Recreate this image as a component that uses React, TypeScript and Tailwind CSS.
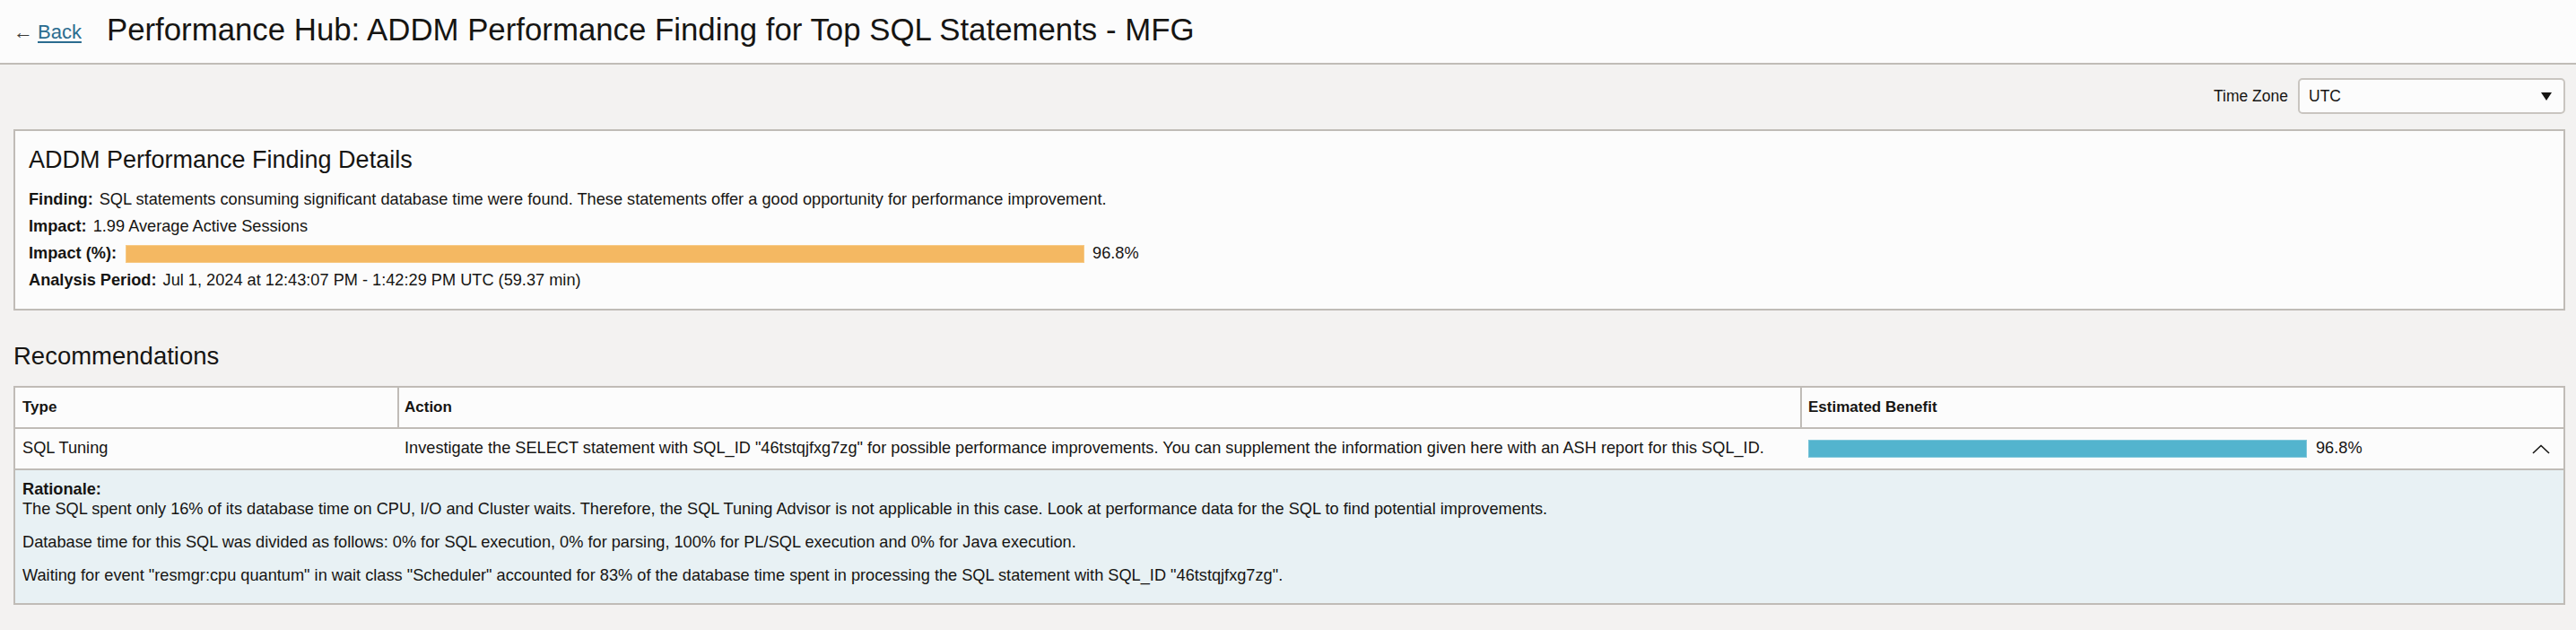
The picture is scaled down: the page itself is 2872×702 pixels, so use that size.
import React from 'react';

const rationale = [
  'The SQL spent only 16% of its database time on CPU, I/O and Cluster waits. Therefore, the SQL Tuning Advisor is not applicable in this case. Look at performance data for the SQL to find potential improvements.',
  'Database time for this SQL was divided as follows: 0% for SQL execution, 0% for parsing, 100% for PL/SQL execution and 0% for Java execution.',
  'Waiting for event "resmgr:cpu quantum" in wait class "Scheduler" accounted for 83% of the database time spent in processing the SQL statement with SQL_ID "46tstqjfxg7zg".',
];

const DetailRow = ({ label, children }: { label: string; children: React.ReactNode }) => (
  <div className="flex h-[30px] items-center text-[18.2px]">
    <span className="mr-[7px] font-bold">{label}</span>
    {children}
  </div>
);

const App = () => {
  return (
    <div className="min-h-screen bg-[#f3f2f1] font-['Liberation_Sans',Arial,sans-serif] text-[#161513]">
      <header className="flex h-[72px] items-center border-b-2 border-[#c0bcb7] bg-[#fcfcfc] pb-[4px] pl-[15px]">
        <a href="#" className="mt-[4px] flex items-center text-[22px] text-[#2b6c8f]">
          <span className="mr-[5px] text-[22px] text-[#3a3937]">←</span>
          <span className="underline decoration-2 underline-offset-[3px]">Back</span>
        </a>
        <h1 className="ml-[28px] text-[34.8px] leading-[40px]">
          Performance Hub: ADDM Performance Finding for Top SQL Statements - MFG
        </h1>
      </header>

      <main className="pb-[28px] pl-[15px] pr-[12px] pt-[15px]">
        <div className="flex items-center justify-end gap-[11px] text-[17.5px]">
          <span>Time Zone</span>
          <div className="flex h-[40px] w-[298px] items-center justify-between rounded-[5px] border-2 border-[#c9c5c0] bg-[#fcfcfc] pl-[10px] pr-[13px]">
            <span>UTC</span>
            <svg width="12" height="9" viewBox="0 0 12 9">
              <polygon points="0,0 12,0 6,9" fill="#161513" />
            </svg>
          </div>
        </div>

        <section className="mt-[17px] border-2 border-[#c0bcb7] bg-[#fcfcfc] px-[15px] py-[16px]">
          <h2 className="mb-[14px] text-[27px] leading-[32px]">ADDM Performance Finding Details</h2>
          <DetailRow label="Finding:">
            <span>
              SQL statements consuming significant database time were found. These statements offer a good
              opportunity for performance improvement.
            </span>
          </DetailRow>
          <DetailRow label="Impact:">
            <span>1.99 Average Active Sessions</span>
          </DetailRow>
          <DetailRow label="Impact (%):">
            <div className="ml-[3px] h-[20px] w-[1069px] border border-[#f7c985] bg-[#f4b862]" />
            <span className="ml-[9px]">96.8%</span>
          </DetailRow>
          <DetailRow label="Analysis Period:">
            <span>Jul 1, 2024 at 12:43:07 PM - 1:42:29 PM UTC (59.37 min)</span>
          </DetailRow>
        </section>

        <h2 className="mt-[35px] text-[27.5px] leading-[32px]">Recommendations</h2>

        <div className="mt-[17px] border-2 border-[#c0bcb7] bg-[#fcfcfc] text-[18.2px]">
          <div className="grid h-[46px] grid-cols-[428px_1fr_849px] border-b-2 border-[#c0bcb7] text-[17px] font-bold">
            <div className="flex items-center border-r-2 border-[#c0bcb7] px-[8px]">Type</div>
            <div className="flex items-center border-r-2 border-[#c0bcb7] px-[6px]">Action</div>
            <div className="flex items-center px-[7px]">Estimated Benefit</div>
          </div>
          <div className="grid h-[46px] grid-cols-[428px_1fr_849px] border-b-2 border-[#c0bcb7]">
            <div className="flex items-center px-[8px]">SQL Tuning</div>
            <div className="flex items-center px-[6px]">
              Investigate the SELECT statement with SQL_ID "46tstqjfxg7zg" for possible performance improvements. You
              can supplement the information given here with an ASH report for this SQL_ID.
            </div>
            <div className="flex items-center pl-[7px] pr-[15px]">
              <div className="h-[20px] w-[556px] border border-[#7fc6da] bg-[#53b4ce]" />
              <span className="ml-[10px]">96.8%</span>
              <div className="flex-1" />
              <svg width="20" height="11" viewBox="0 0 20 11">
                <polyline points="1,10 10,1.5 19,10" fill="none" stroke="#161513" strokeWidth="1.6" />
              </svg>
            </div>
          </div>
          <div className="bg-[#e8f1f4] px-[8px] pb-[5px] pt-[10px] leading-[22px]">
            <div className="font-bold">Rationale:</div>
            {rationale.map((text) => (
              <p key={text} className="mb-[15px]">
                {text}
              </p>
            ))}
          </div>
        </div>
      </main>
    </div>
  );
};

export default App;
